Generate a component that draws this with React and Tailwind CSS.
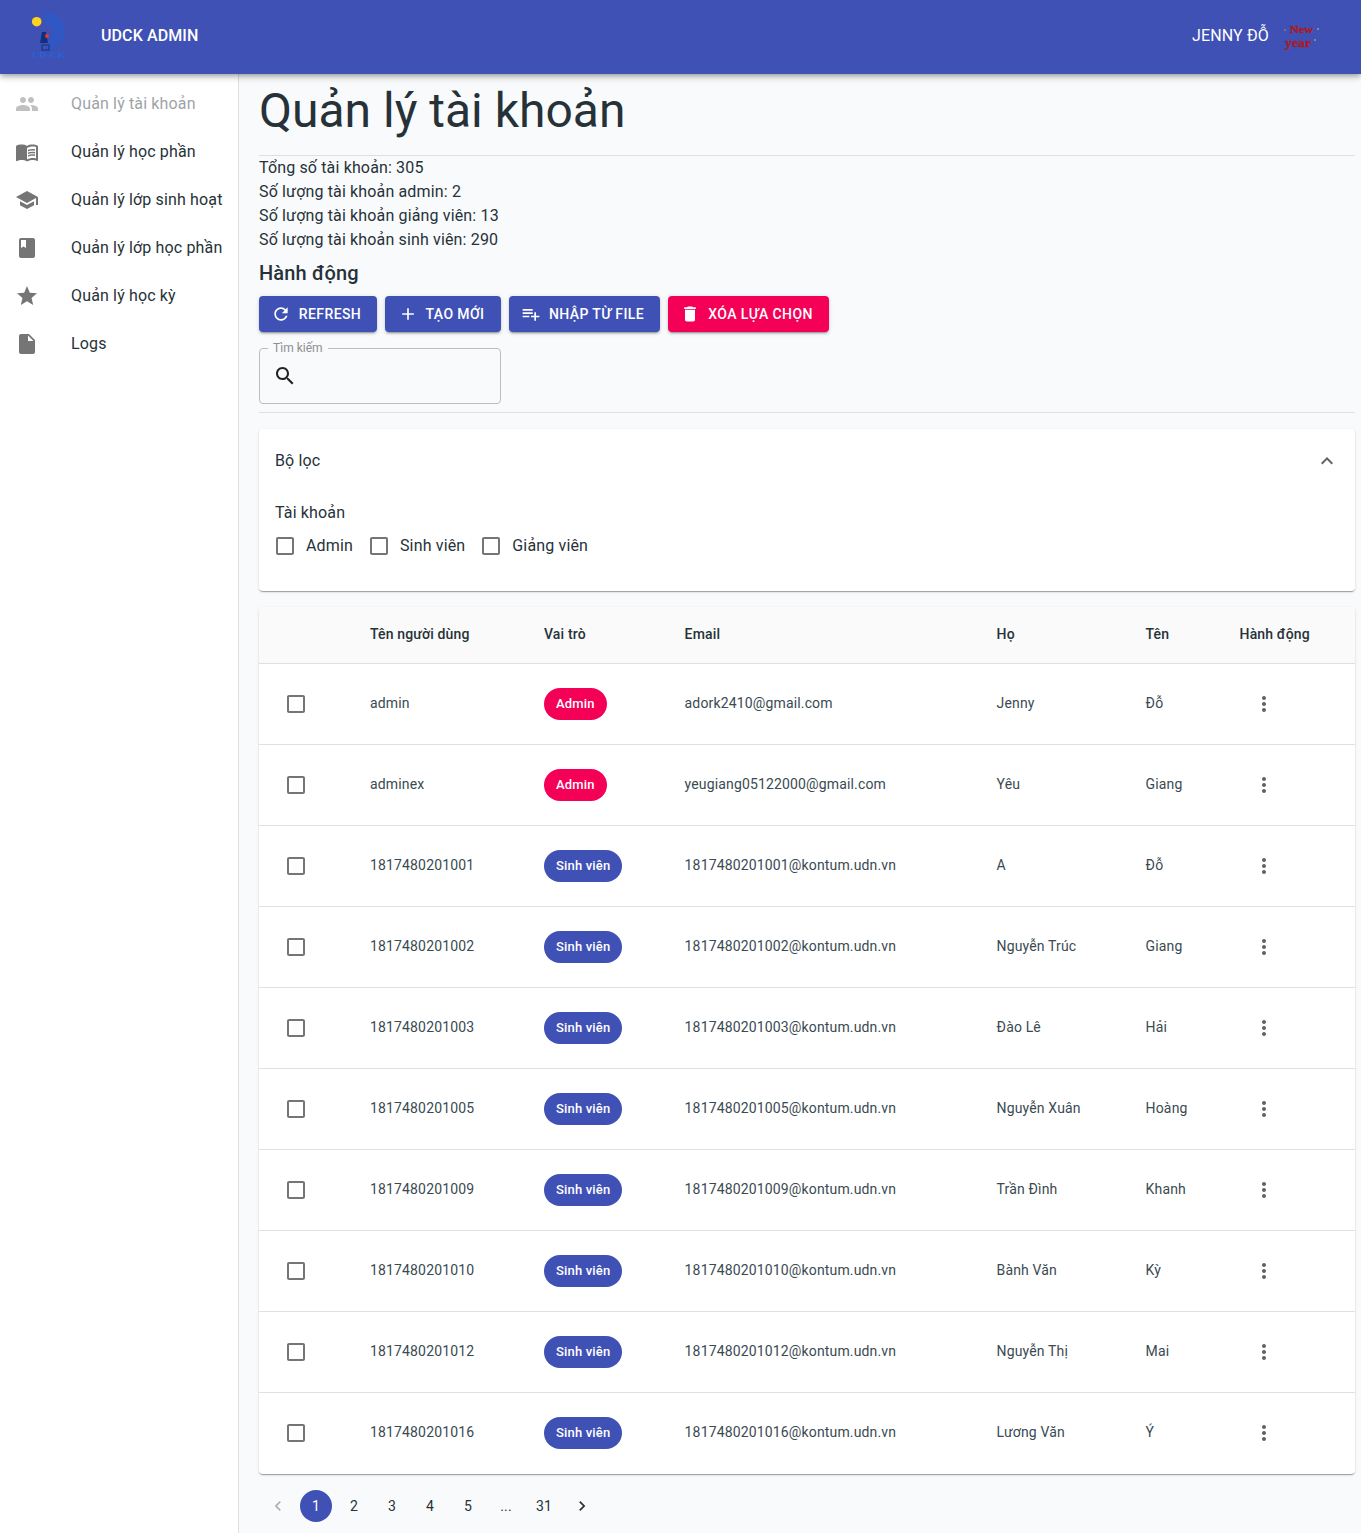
import React from 'react';

const P = {
  people: 'M16 11c1.66 0 2.99-1.34 2.99-3S17.66 5 16 5c-1.66 0-3 1.34-3 3s1.34 3 3 3zm-8 0c1.66 0 2.99-1.34 2.99-3S9.66 5 8 5C6.34 5 5 6.34 5 8s1.34 3 3 3zm0 2c-2.33 0-7 1.17-7 3.5V19h14v-2.5c0-2.33-4.67-3.5-7-3.5zm8 0c-.29 0-.62.02-.97.05 1.16.84 1.97 1.97 1.97 3.45V19h6v-2.5c0-2.33-4.67-3.5-7-3.5z',
  book: 'M21 5c-1.11-.35-2.33-.5-3.5-.5-1.95 0-4.05.4-5.5 1.5-1.45-1.1-3.55-1.5-5.5-1.5S2.45 4.9 1 6v14.65c0 .25.25.5.5.5.1 0 .15-.05.25-.05C3.1 20.45 5.05 20 6.5 20c1.95 0 4.05.4 5.5 1.5 1.35-.85 3.8-1.5 5.5-1.5 1.65 0 3.35.3 4.75 1.05.1.05.15.05.25.05.25 0 .5-.25.5-.5V6c-.6-.45-1.25-.75-2-1zm0 13.5c-1.1-.35-2.3-.5-3.5-.5-1.7 0-4.15.65-5.5 1.5V8c1.35-.85 3.8-1.5 5.5-1.5 1.2 0 2.4.15 3.5.5v11.5zM17.5 10.5c.88 0 1.73.09 2.5.26V9.24c-.79-.15-1.64-.24-2.5-.24-1.7 0-3.24.29-4.5.83v1.66c1.13-.64 2.7-.99 4.5-.99zM13 12.49v1.66c1.13-.64 2.7-.99 4.5-.99.88 0 1.73.09 2.5.26V11.9c-.79-.15-1.64-.24-2.5-.24-1.7 0-3.24.3-4.5.83zM17.5 14.33c-1.7 0-3.24.29-4.5.83v1.66c1.13-.64 2.7-.99 4.5-.99.88 0 1.73.09 2.5.26v-1.52c-.79-.16-1.64-.24-2.5-.24z',
  school: 'M5 13.18v4L12 21l7-3.82v-4L12 17l-7-3.82zM12 3L1 9l11 6 9-4.91V17h2V9L12 3z',
  bookmark: 'M18 2H6c-1.1 0-2 .9-2 2v16c0 1.1.9 2 2 2h12c1.1 0 2-.9 2-2V4c0-1.1-.9-2-2-2zM6 4h5v8l-2.5-1.5L6 12V4z',
  star: 'M12 17.27L18.18 21l-1.64-7.03L22 9.24l-7.19-.61L12 2 9.19 8.63 2 9.24l5.46 4.73L5.82 21z',
  file: 'M6 2c-1.1 0-1.99.9-1.99 2L4 20c0 1.1.89 2 1.99 2H18c1.1 0 2-.9 2-2V8l-6-6H6zm7 7V3.5L18.5 9H13z',
  refresh: 'M17.65 6.35C16.2 4.9 14.21 4 12 4c-4.42 0-7.99 3.58-7.99 8s3.57 8 7.99 8c3.73 0 6.84-2.55 7.73-6h-2.08c-.82 2.33-3.04 4-5.65 4-3.31 0-6-2.69-6-6s2.69-6 6-6c1.66 0 3.14.69 4.22 1.78L13 11h7V4l-2.35 2.35z',
  add: 'M19 13h-6v6h-2v-6H5v-2h6V5h2v6h6v2z',
  playlist: 'M14 10H2v2h12v-2zm0-4H2v2h12V6zm4 8v-4h-2v4h-4v2h4v4h2v-4h4v-2h-4zM2 16h8v-2H2v2z',
  trash: 'M6 19c0 1.1.9 2 2 2h8c1.1 0 2-.9 2-2V7H6v12zM19 4h-3.5l-1-1h-5l-1 1H5v2h14V4z',
  search: 'M15.5 14h-.79l-.28-.27C15.41 12.59 16 11.11 16 9.5 16 5.91 13.09 3 9.5 3S3 5.91 3 9.5 5.91 16 9.5 16c1.61 0 3.09-.59 4.23-1.57l.27.28v.79l5 4.99L20.49 19l-4.99-5zm-6 0C7.01 14 5 11.99 5 9.5S7.01 5 9.5 5 14 7.01 14 9.5 11.99 14 9.5 14z',
  more: 'M12 8c1.1 0 2-.9 2-2s-.9-2-2-2-2 .9-2 2 .9 2 2 2zm0 2c-1.1 0-2 .9-2 2s.9 2 2 2 2-.9 2-2-.9-2-2-2zm0 6c-1.1 0-2 .9-2 2s.9 2 2 2 2-.9 2-2-.9-2-2-2z',
  up: 'M12 8l-6 6 1.41 1.41L12 10.83l4.59 4.58L18 14z',
  left: 'M15.41 7.41L14 6l-6 6 6 6 1.41-1.41L10.83 12z',
  right: 'M10 6L8.59 7.41 13.17 12l-4.58 4.59L10 18l6-6z',
  box: 'M19 5v14H5V5h14m0-2H5c-1.1 0-2 .9-2 2v14c0 1.1.9 2 2 2h14c1.1 0 2-.9 2-2V5c0-1.1-.9-2-2-2z',
};

const Icon = ({ d, className = 'w-6 h-6' }) => (
  <svg viewBox="0 0 24 24" fill="currentColor" className={className} aria-hidden="true">
    <path d={d} />
  </svg>
);

const menu = [
  { icon: P.people, label: 'Quản lý tài khoản', active: true },
  { icon: P.book, label: 'Quản lý học phần' },
  { icon: P.school, label: 'Quản lý lớp sinh hoạt' },
  { icon: P.bookmark, label: 'Quản lý lớp học phần' },
  { icon: P.star, label: 'Quản lý học kỳ' },
  { icon: P.file, label: 'Logs' },
];

const actions = [
  { icon: P.refresh, label: 'Refresh', cls: 'w-[118px] bg-[#3f51b5]' },
  { icon: P.add, label: 'Tạo mới', cls: 'w-[116px] bg-[#3f51b5]' },
  { icon: P.playlist, label: 'Nhập từ file', cls: 'w-[151px] bg-[#3f51b5]' },
  { icon: P.trash, label: 'Xóa lựa chọn', cls: 'w-[161px] bg-[#f50057]' },
];

const rows = [
  ['admin', 'Admin', 'adork2410@gmail.com', 'Jenny', 'Đỗ'],
  ['adminex', 'Admin', 'yeugiang05122000@gmail.com', 'Yêu', 'Giang'],
  ['1817480201001', 'Sinh viên', '1817480201001@kontum.udn.vn', 'A', 'Đỗ'],
  ['1817480201002', 'Sinh viên', '1817480201002@kontum.udn.vn', 'Nguyễn Trúc', 'Giang'],
  ['1817480201003', 'Sinh viên', '1817480201003@kontum.udn.vn', 'Đào Lê', 'Hải'],
  ['1817480201005', 'Sinh viên', '1817480201005@kontum.udn.vn', 'Nguyễn Xuân', 'Hoàng'],
  ['1817480201009', 'Sinh viên', '1817480201009@kontum.udn.vn', 'Trần Đình', 'Khanh'],
  ['1817480201010', 'Sinh viên', '1817480201010@kontum.udn.vn', 'Bành Văn', 'Kỳ'],
  ['1817480201012', 'Sinh viên', '1817480201012@kontum.udn.vn', 'Nguyễn Thị', 'Mai'],
  ['1817480201016', 'Sinh viên', '1817480201016@kontum.udn.vn', 'Lương Văn', 'Ý'],
];

const cardShadow = 'shadow-[0_2px_1px_-1px_rgba(0,0,0,0.2),0_1px_1px_0_rgba(0,0,0,0.14),0_1px_3px_0_rgba(0,0,0,0.12)]';

const Logo = () => (
  <svg viewBox="0 0 40 50" className="w-[40px] h-[50px]" aria-hidden="true">
    <circle cx="8.7" cy="9.7" r="4.8" fill="#ffd21f" />
    <g fill="none" stroke="#1f5fd6" strokeWidth="1.4">
      <path d="M17 1 C29 3 37 11 36 21 C35 30 29 36 21 38" />
      <path d="M17 4 C27 6 33 13 32.5 21 C32 28 27 33 21 35" />
      <path d="M17 7 C25 9 30 14 29.5 21 C29 26 25 30 20 32" />
      <path d="M17 10 C23 11 27 16 26 21 C25 25 22 28 19 29" />
    </g>
    <path d="M14 20 L18 20 L20 31 L12 31 Z" fill="#10307e" />
    <circle cx="19" cy="24" r="2" fill="#e53935" />
    <rect x="14" y="33" width="7" height="5" fill="none" stroke="#10307e" strokeWidth="1" />
    <text x="4" y="46" fontSize="8.5" fontWeight="700" textLength="33" lengthAdjust="spacingAndGlyphs" fontFamily="Liberation Serif, serif" fill="#2a62d8">UD-CK</text>
  </svg>
);

const NewYear = () => (
  <svg viewBox="0 0 40 30" className="w-[40px] h-[30px]" aria-hidden="true">
    <text x="10" y="10.5" fontSize="10" fontWeight="700" textLength="23" lengthAdjust="spacingAndGlyphs" fontFamily="Liberation Serif, serif" fill="#a81c26" stroke="#a81c26" strokeWidth="0.4">New</text>
    <text x="5" y="24.5" fontSize="13" fontWeight="700" textLength="26" lengthAdjust="spacingAndGlyphs" fontFamily="Liberation Serif, serif" fill="#a81c26" stroke="#a81c26" strokeWidth="0.4">year</text>
    <circle cx="5" cy="8" r="1" fill="#a0708a" />
    <circle cx="38" cy="7" r="1" fill="#9e9e7a" />
    <circle cx="35" cy="18" r="1" fill="#9e9e7a" />
  </svg>
);

const Check = ({ label }) => (
  <label className="flex items-center mr-4">
    <span className="w-[42px] h-[42px] -ml-[11px] flex items-center justify-center text-[#757575]">
      <Icon d={P.box} />
    </span>
    <span className="tracking-[0.15px]">{label}</span>
  </label>
);

const App = () => {
  return (
    <div className="min-h-screen bg-[#f9fafc] text-[#263238] font-['Roboto',sans-serif] relative">
      {/* Header */}
      <header className="relative z-10 h-[74px] bg-[#3f51b5] text-white flex items-center justify-between pl-[28px] pr-[41px] shadow-[0_2px_4px_-1px_rgba(0,0,0,0.2),0_4px_5px_0_rgba(0,0,0,0.14),0_1px_10px_0_rgba(0,0,0,0.12)]">
        <div className="flex items-center">
          <Logo />
          <span className="ml-[33px] mb-[2px] text-base font-medium tracking-[0.1px]">UDCK ADMIN</span>
        </div>
        <div className="flex items-center">
          <span className="mb-[2px] text-base tracking-[0.15px]">JENNY ĐỖ</span>
          <span className="ml-[11px]"><NewYear /></span>
        </div>
      </header>

      <div className="flex min-h-[1459px]">
        {/* Sidebar */}
        <aside className="w-[239px] shrink-0 bg-white border-r border-[#e0e0e0] pt-[6px]">
          {menu.map((m) => (
            <div key={m.label} className={`h-12 flex items-center pl-[15px] ${m.active ? 'opacity-[0.45]' : ''}`}>
              <span className="w-14 text-[#757575]"><Icon d={m.icon} /></span>
              <span className="text-base tracking-[0.15px] whitespace-nowrap">{m.label}</span>
            </div>
          ))}
        </aside>

        {/* Main */}
        <main className="flex-1 min-w-0 pl-5 pr-[6px]">
          <h1 className="text-[48px] leading-[56px] mt-[9px] mb-4 text-[#263238]">Quản lý tài khoản</h1>
          <hr className="border-[#e0e0e0]" />
          <div className="text-base leading-6 tracking-[0.15px] mt-[-1px] pt-[1px]">
            <p>Tổng số tài khoản: 305</p>
            <p>Số lượng tài khoản admin: 2</p>
            <p>Số lượng tài khoản giảng viên: 13</p>
            <p>Số lượng tài khoản sinh viên: 290</p>
          </div>
          <h2 className="text-xl font-medium leading-8 tracking-[0.15px] mt-[5px]">Hành động</h2>

          <div className="flex gap-2 mt-[7px]">
            {actions.map((a) => (
              <button key={a.label} className={`h-9 pr-1 rounded flex items-center justify-center gap-2 text-white text-sm font-medium uppercase tracking-[0.4px] shadow-[0_3px_1px_-2px_rgba(0,0,0,0.2),0_2px_2px_0_rgba(0,0,0,0.14),0_1px_5px_0_rgba(0,0,0,0.12)] ${a.cls}`}>
                <Icon d={a.icon} className="w-5 h-5" />
                {a.label}
              </button>
            ))}
          </div>

          {/* Search */}
          <div className="relative w-[242px] h-14 mt-4 border border-[#bdbdbd] rounded flex items-center pl-[13px]">
            <span className="absolute left-[8px] -top-[9px] px-[5px] bg-[#f9fafc] text-xs leading-4 text-[#8f8f8f]">Tìm kiếm</span>
            <Icon d={P.search} className="w-6 h-6 text-[#212121]" />
          </div>
          <hr className="border-[#e0e0e0] mt-2" />

          {/* Filter */}
          <section className={`mt-4 h-[162px] bg-white rounded px-4 ${cardShadow}`}>
            <div className="h-16 flex items-center justify-between">
              <span className="text-base tracking-[0.15px]">Bộ lọc</span>
              <span className="text-[#616161]"><Icon d={P.up} /></span>
            </div>
            <p className="text-base leading-6 tracking-[0.15px] mt-2">Tài khoản</p>
            <div className="flex items-center">
              <Check label="Admin" />
              <Check label="Sinh viên" />
              <Check label="Giảng viên" />
            </div>
          </section>

          {/* Table */}
          <section className={`mt-4 bg-white rounded overflow-hidden ${cardShadow}`}>
            <table className="w-full table-fixed text-sm tracking-[0.15px] text-left text-[#3a4a52]">
              <colgroup>
                <col className="w-[95px]" />
                <col className="w-[174px]" />
                <col className="w-[140.6px]" />
                <col className="w-[312px]" />
                <col className="w-[149px]" />
                <col className="w-[94px]" />
                <col className="w-[131.4px]" />
              </colgroup>
              <thead className="bg-[#fafafa] text-[#263238]">
                <tr className="h-[56px] border-b border-[#e0e0e0]">
                  <th></th>
                  <th className="pl-4 pb-[2px] font-medium">Tên người dùng</th>
                  <th className="pl-4 pb-[2px] font-medium">Vai trò</th>
                  <th className="pl-4 pb-[2px] font-medium">Email</th>
                  <th className="pl-4 pb-[2px] font-medium">Họ</th>
                  <th className="pl-4 pb-[2px] font-medium">Tên</th>
                  <th className="pl-4 pb-[2px] font-medium">Hành động</th>
                </tr>
              </thead>
              <tbody>
                {rows.map((r, i) => (
                  <tr key={r[0]} className={i < rows.length - 1 ? 'h-[81px] border-b border-[#e0e0e0]' : 'h-[81px] border-b border-transparent'}>
                    <td className="pl-[25px] text-[#757575]"><Icon d={P.box} /></td>
                    <td className="pl-4 pb-[2px]">{r[0]}</td>
                    <td className="pl-4">
                      <span className={`inline-flex items-center h-8 px-3 pt-[1px] rounded-full text-white text-[13px] font-medium tracking-[0.16px] ${r[1] === 'Admin' ? 'bg-[#f50057]' : 'bg-[#3f51b5]'}`}>{r[1]}</span>
                    </td>
                    <td className="pl-4 pb-[2px]">{r[2]}</td>
                    <td className="pl-4 pb-[2px]">{r[3]}</td>
                    <td className="pl-4 pb-[2px]">{r[4]}</td>
                    <td className="pl-[28px] text-[#616161]"><Icon d={P.more} /></td>
                  </tr>
                ))}
              </tbody>
            </table>
          </section>

          {/* Pagination */}
          <nav className="flex items-center gap-[6px] mt-4 pl-[3px] text-sm tracking-[0.15px]">
            <span className="w-8 h-8 flex items-center justify-center text-[#b0b0b0]"><Icon d={P.left} className="w-5 h-5" /></span>
            <span className="w-8 h-8 flex items-center justify-center rounded-full bg-[#3f51b5] text-white">1</span>
            {['2', '3', '4', '5', '...', '31'].map((n) => (
              <span key={n} className="w-8 h-8 flex items-center justify-center">{n}</span>
            ))}
            <span className="w-8 h-8 flex items-center justify-center text-[#263238]"><Icon d={P.right} className="w-5 h-5" /></span>
          </nav>
        </main>
      </div>
    </div>
  );
};

export default App;
